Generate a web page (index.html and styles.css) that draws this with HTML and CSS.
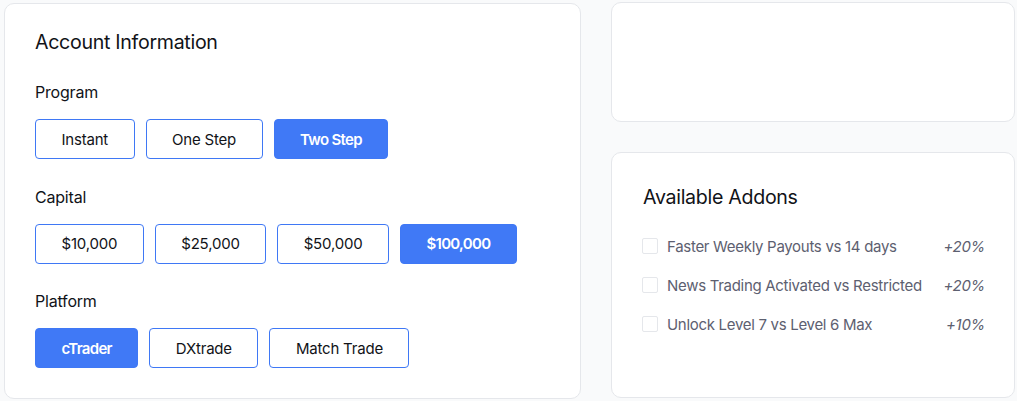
FILE: index.html
```html
<!DOCTYPE html>
<html>
<head>
<meta charset="utf-8">
<link rel="stylesheet" href="styles.css">
</head>
<body>
<div class="page">
  <section class="card account">
    <h2 class="title">Account Information</h2>
    <div class="group">
      <div class="label">Program</div>
      <div class="options">
        <button class="opt">Instant</button>
        <button class="opt">One Step</button>
        <button class="opt active">Two Step</button>
      </div>
    </div>
    <div class="group">
      <div class="label">Capital</div>
      <div class="options">
        <button class="opt">$10,000</button>
        <button class="opt">$25,000</button>
        <button class="opt">$50,000</button>
        <button class="opt active">$100,000</button>
      </div>
    </div>
    <div class="group">
      <div class="label">Platform</div>
      <div class="options">
        <button class="opt active">cTrader</button>
        <button class="opt">DXtrade</button>
        <button class="opt">Match Trade</button>
      </div>
    </div>
  </section>
  <div class="side">
    <section class="card blank"></section>
    <section class="card addons">
      <h2 class="title">Available Addons</h2>
      <ul class="addon-list">
        <li class="addon"><span class="check"></span><span class="name">Faster Weekly Payouts vs 14 days</span><span class="pct">+20%</span></li>
        <li class="addon"><span class="check"></span><span class="name">News Trading Activated vs Restricted</span><span class="pct">+20%</span></li>
        <li class="addon"><span class="check"></span><span class="name">Unlock Level 7 vs Level 6 Max</span><span class="pct">+10%</span></li>
      </ul>
    </section>
  </div>
</div>
</body>
</html>
```

FILE: styles.css
```css
* { box-sizing: border-box; }
html, body {
  margin: 0;
  padding: 0;
  background: #f9fafb;
  font-family: Inter, "Liberation Sans", sans-serif;
  color: #111318;
}
.page {
  display: flex;
  gap: 30px;
  padding: 2px 0 0 4px;
  width: 1017px;
  height: 401px;
}
.card {
  background: #ffffff;
  border: 1px solid #e5e7eb;
  border-radius: 10px;
}
.account {
  width: 577px;
  height: 396px;
  margin-top: 1px;
  padding: 25px 30px 0 30px;
}
.title {
  margin: 0;
  font-size: 19.6px;
  font-weight: 400;
  line-height: 26px;
  letter-spacing: -0.3px;
}
.group { margin-top: 26px; }
.group + .group { margin-top: 26.5px; }
.label {
  font-size: 16px;
  line-height: 22px;
  letter-spacing: -0.2px;
}
.options {
  display: flex;
  gap: 11px;
  margin-top: 16px;
}
.opt {
  height: 40px;
  padding: 0 25.5px;
  border: 1px solid #3f78f5;
  border-radius: 4px;
  background: #ffffff;
  font-family: inherit;
  font-size: 15px;
  letter-spacing: -0.2px;
  color: #111318;
  cursor: pointer;
}
.opt.active {
  background: #4079f6;
  color: #ffffff;
  font-weight: 600;
  letter-spacing: -0.7px;
}
.side {
  display: flex;
  flex-direction: column;
  gap: 30px;
  width: 404px;
}
.blank { height: 120px; }
.addons {
  height: 246px;
  padding: 31px 29px 0 31px;
}
.addon-list {
  list-style: none;
  margin: 25px 0 0 0;
  padding: 0;
  display: flex;
  flex-direction: column;
  gap: 17px;
}
.addon {
  display: flex;
  align-items: center;
  height: 22px;
  font-size: 15px;
  color: #5d6070;
  letter-spacing: -0.3px;
}
.check {
  width: 16px;
  height: 16px;
  border: 1px solid #e5e7eb;
  border-radius: 2px;
  margin-right: 9px;
  margin-left: -1px;
  flex: none;
}
.name { flex: 1; }
.pct { font-style: italic; }
```
